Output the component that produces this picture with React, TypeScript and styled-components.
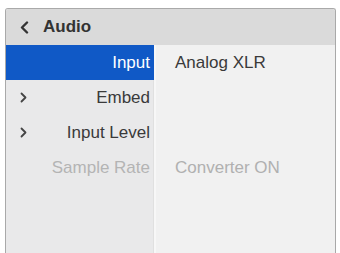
import React from "react";
import styled, { createGlobalStyle } from "styled-components";

const Global = createGlobalStyle`
  html, body { margin: 0; padding: 0; background: #ffffff; }
  body { font-family: "Liberation Sans", Arial, sans-serif; overflow: hidden; }
`;

const Page = styled.div`
  padding: 8px 4px 0 5px;
  height: 253px;
  box-sizing: border-box;
  overflow: hidden;
`;

const Panel = styled.div`
  height: 100%;
  box-sizing: border-box;
  border: 1px solid #a9a9a9;
  border-bottom: none;
  border-radius: 3px 3px 0 0;
  display: flex;
  flex-direction: column;
  overflow: hidden;
`;

const Header = styled.div`
  height: 36px;
  flex: none;
  background: #dadada;
  display: flex;
  align-items: center;
  gap: 14px;
  padding-left: 14px;
  color: #333333;
  font-size: 17px;
  font-weight: 700;
`;

const Body = styled.div`
  flex: 1;
  display: grid;
  grid-template-columns: 150px 1fr;
`;

const LeftCol = styled.div`
  background: #e9e9ea;
  border-right: 2px solid #f7f7f7;
  box-shadow: inset -1px 0 0 #e0e0e0;
`;

const RightCol = styled.div`
  background: #f1f1f1;
  padding-left: 19px;
`;

const LabelRow = styled.div<{ $active?: boolean; $disabled?: boolean }>`
  height: 35px;
  display: flex;
  align-items: center;
  padding: 0 4px 0 14px;
  font-size: 17px;
  background: ${(p) => (p.$active ? "#1059c6" : "transparent")};
  color: ${(p) => (p.$active ? "#ffffff" : p.$disabled ? "#b4b4b4" : "#3a3a3a")};
`;

const Label = styled.span`
  margin-left: auto;
`;

const ValueRow = styled.div<{ $disabled?: boolean }>`
  height: 35px;
  display: flex;
  align-items: center;
  font-size: 17px;
  color: ${(p) => (p.$disabled ? "#b0b0b0" : "#3a3a3a")};
`;

const Back = () => (
  <svg width="9" height="13" viewBox="0 0 9 13">
    <path d="M7 1.5 L2 6.5 L7 11.5" fill="none" stroke="#333" strokeWidth="2.4" strokeLinecap="round" strokeLinejoin="round" />
  </svg>
);

const Chevron = () => (
  <svg width="7" height="11" viewBox="0 0 7 11">
    <path d="M1.5 1.5 L5.5 5.5 L1.5 9.5" fill="none" stroke="#444" strokeWidth="1.8" strokeLinecap="round" strokeLinejoin="round" />
  </svg>
);

const rows = [
  { label: "Input", value: "Analog XLR", active: true },
  { label: "Embed", chevron: true },
  { label: "Input Level", chevron: true },
  { label: "Sample Rate", value: "Converter ON", disabled: true },
];

export default function App() {
  return (
    <>
      <Global />
      <Page>
        <Panel>
          <Header>
            <Back />
            <span>Audio</span>
          </Header>
          <Body>
            <LeftCol>
              {rows.map((r) => (
                <LabelRow key={r.label} $active={r.active} $disabled={r.disabled}>
                  {r.chevron && <Chevron />}
                  <Label>{r.label}</Label>
                </LabelRow>
              ))}
            </LeftCol>
            <RightCol>
              {rows.map((r) => (
                <ValueRow key={r.label} $disabled={r.disabled}>
                  {r.value ?? ""}
                </ValueRow>
              ))}
            </RightCol>
          </Body>
        </Panel>
      </Page>
    </>
  );
}
